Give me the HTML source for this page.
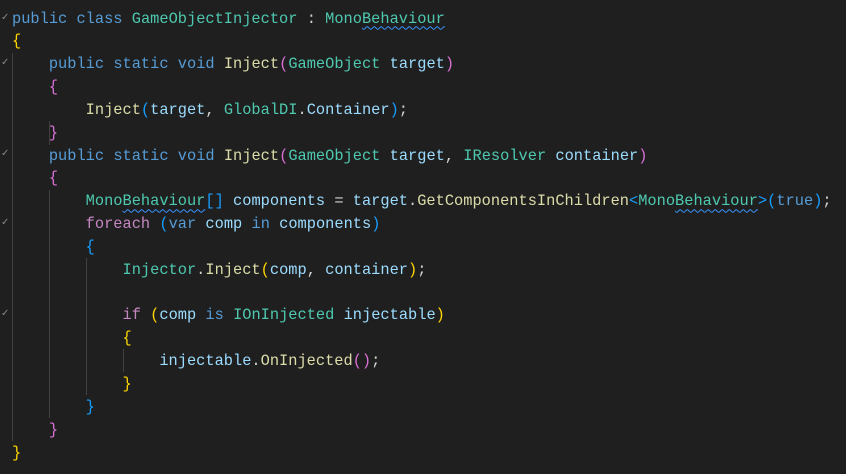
<!DOCTYPE html>
<html><head><style>
body{margin:0;background:#1f1f1f;width:846px;height:474px;overflow:hidden;position:relative}
pre{margin:0;position:absolute;left:12px;top:7.5px;font-family:"Liberation Mono",monospace;font-size:15.35px;line-height:22.84px;color:#d4d4d4}
.k{color:#569cd6}.t{color:#4ec9b0}.m{color:#dcdcaa}.v{color:#9cdcfe}.c{color:#c586c0}
.g{color:#ffd700}.p{color:#da70d6}.b{color:#179fff}
.w{text-decoration:underline wavy #3794ff;text-decoration-thickness:1px;text-underline-offset:3px}
.guide{position:absolute;width:1px;background:#404040}
.f{position:absolute;left:1px;color:#888;font:10px "DejaVu Sans",sans-serif}
</style></head><body>
<div class="guide" style="left:12px;top:53px;height:388px"></div>
<div class="guide" style="left:49px;top:121px;height:24px"></div>
<div class="guide" style="left:49px;top:190px;height:228px"></div>
<div class="guide" style="left:86px;top:258px;height:137px"></div>
<div class="guide" style="left:123px;top:349px;height:23px"></div>
<span class="f" style="top:12px">✓</span>
<span class="f" style="top:57px">✓</span>
<span class="f" style="top:148px">✓</span>
<span class="f" style="top:217px">✓</span>
<span class="f" style="top:308px">✓</span>
<pre><span class="k">public</span> <span class="k">class</span> <span class="t">GameObjectInjector</span> : <span class="t">Mono<span class="w">Behaviour</span></span>
<span class="g">{</span>
    <span class="k">public</span> <span class="k">static</span> <span class="k">void</span> <span class="m">Inject</span><span class="p">(</span><span class="t">GameObject</span> <span class="v">target</span><span class="p">)</span>
    <span class="p">{</span>
        <span class="m">Inject</span><span class="b">(</span><span class="v">target</span>, <span class="t">GlobalDI</span>.<span class="v">Container</span><span class="b">)</span>;
    <span class="p">}</span>
    <span class="k">public</span> <span class="k">static</span> <span class="k">void</span> <span class="m">Inject</span><span class="p">(</span><span class="t">GameObject</span> <span class="v">target</span>, <span class="t">IResolver</span> <span class="v">container</span><span class="p">)</span>
    <span class="p">{</span>
        <span class="t">Mono<span class="w">Behaviour</span></span><span class="b">[]</span> <span class="v">components</span> = <span class="v">target</span>.<span class="m">GetComponentsInChildren</span><span class="b">&lt;</span><span class="t">Mono<span class="w">Behaviour</span></span><span class="b">&gt;(</span><span class="k">true</span><span class="b">)</span>;
        <span class="c">foreach</span> <span class="b">(</span><span class="k">var</span> <span class="v">comp</span> <span class="k">in</span> <span class="v">components</span><span class="b">)</span>
        <span class="b">{</span>
            <span class="t">Injector</span>.<span class="m">Inject</span><span class="g">(</span><span class="v">comp</span>, <span class="v">container</span><span class="g">)</span>;

            <span class="c">if</span> <span class="g">(</span><span class="v">comp</span> <span class="k">is</span> <span class="t">IOnInjected</span> <span class="v">injectable</span><span class="g">)</span>
            <span class="g">{</span>
                <span class="v">injectable</span>.<span class="m">OnInjected</span><span class="p">()</span>;
            <span class="g">}</span>
        <span class="b">}</span>
    <span class="p">}</span>
<span class="g">}</span></pre>
</body></html>
